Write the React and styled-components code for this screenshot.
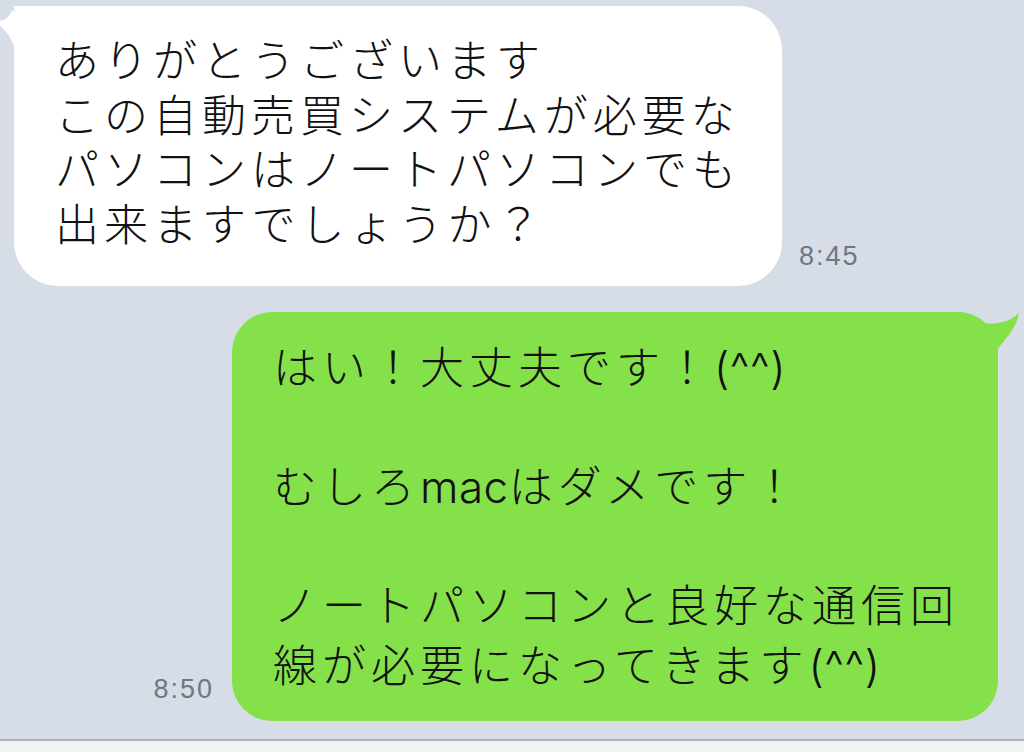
import styled, { createGlobalStyle } from "styled-components";

const GlobalStyle = createGlobalStyle`
  html, body {
    margin: 0;
    padding: 0;
    background: #d7dde6;
  }
  * {
    box-sizing: border-box;
  }
`

const Screen = styled.div`
  width: 1024px;
  height: 752px;
  display: flex;
  flex-direction: column;
  overflow: hidden;
  font-family: "Noto Sans CJK JP", "Noto Sans", sans-serif;
`

const Talk = styled.div`
  height: 739px;
  display: flex;
  flex-direction: column;
  gap: 26px;
  padding: 6px 26px 0 14px;
  background: #d7dde6;
`

const InputBar = styled.div`
  flex: 1;
  background: #f1f2f6;
  border-top: 2px solid #afb3b9;
`

const Row = styled.div`
  display: flex;
  align-items: flex-end;
  justify-content: ${(p) => (p.mine ? "flex-end" : "flex-start")};
`

const Bubble = styled.div`
  position: relative;
  width: ${(p) => p.w}px;
  padding: ${(p) => (p.mine ? "27px 20px 24px 41px" : "29px 20px 33px 41px")};
  background: ${(p) => (p.mine ? "#85e14a" : "#ffffff")};
  border-radius: ${(p) => (p.mine ? "40px" : "8px 44px 44px 44px")};
  color: #111;
  font-family: "Liberation Sans", "Noto Sans CJK JP", sans-serif;
  font-size: 44px;
  font-weight: 300;
  letter-spacing: 5px;
  line-height: ${(p) => (p.mine ? "59.6px" : "54.5px")};
`

const Line = styled.div`
  white-space: nowrap;
`

// ascii runs like "mac" or "(^^)" sit tighter and thinner than the kana around them
const Latin = styled.span`
  font-family: Inter, "Noto Sans", sans-serif;
  font-weight: 300;
  letter-spacing: 0.5px;
`

const Tail = styled.svg`
  position: absolute;
  top: 0;
  left: ${(p) => (p.mine ? "auto" : "-14px")};
  right: ${(p) => (p.mine ? "-22px" : "auto")};
`

const Time = styled.span`
  font-family: "Liberation Sans", Arial, sans-serif;
  font-size: 27px;
  line-height: 27px;
  letter-spacing: 2px;
  color: #6c7787;
  margin: ${(p) => (p.mine ? "0 18px 18px 0" : "0 0 16px 17px")};
`

function MessageText({ lines }) {
  return lines.map((line, n) => (
    <Line key={n}>
      {line === ""
        ? "\u00a0"
        : line.split(/([\x20-\x7e]+)/).map((part, i) =>
            i % 2 ? <Latin key={i}>{part}</Latin> : part
          )}
    </Line>
  ))
}

function Received({ lines, time, width }) {
  return (
    <Row>
      <Bubble w={width}>
        <Tail width="40" height="50" viewBox="0 6 40 50">
          <path d="M26,6 C16,6 11,12 7,18 C5,20 2,21 -6,21 C2,27 10,34 14,46 L14,6 Z" fill="#ffffff" />
        </Tail>
        <MessageText lines={lines} />
      </Bubble>
      <Time>{time}</Time>
    </Row>
  )
}

function Sent({ lines, time, width }) {
  return (
    <Row mine>
      <Time mine>{time}</Time>
      <Bubble mine w={width}>
        <Tail mine width="62" height="60" viewBox="0 0 62 60">
          <path d="M0,0 C12,0 18,8 24,11 C38,13 52,10 61,1 C58,18 46,28 40,37 L40,60 L0,60 Z" fill="#85e14a" />
        </Tail>
        <MessageText lines={lines} />
      </Bubble>
    </Row>
  )
}

const messages = [
  {
    id: 1,
    mine: false,
    time: "8:45",
    width: 768,
    lines: [
      "ありがとうございます",
      "この自動売買システムが必要な",
      "パソコンはノートパソコンでも",
      "出来ますでしょうか？",
    ],
  },
  {
    id: 2,
    mine: true,
    time: "8:50",
    width: 766,
    lines: [
      "はい！大丈夫です！(^^)",
      "",
      "むしろmacはダメです！",
      "",
      "ノートパソコンと良好な通信回",
      "線が必要になってきます(^^)",
    ],
  },
]

export default function App() {
  return (
    <>
      <GlobalStyle />
      <Screen>
        <Talk>
          {messages.map((m) =>
            m.mine ? (
              <Sent key={m.id} lines={m.lines} time={m.time} width={m.width} />
            ) : (
              <Received key={m.id} lines={m.lines} time={m.time} width={m.width} />
            )
          )}
        </Talk>
        <InputBar />
      </Screen>
    </>
  )
}
